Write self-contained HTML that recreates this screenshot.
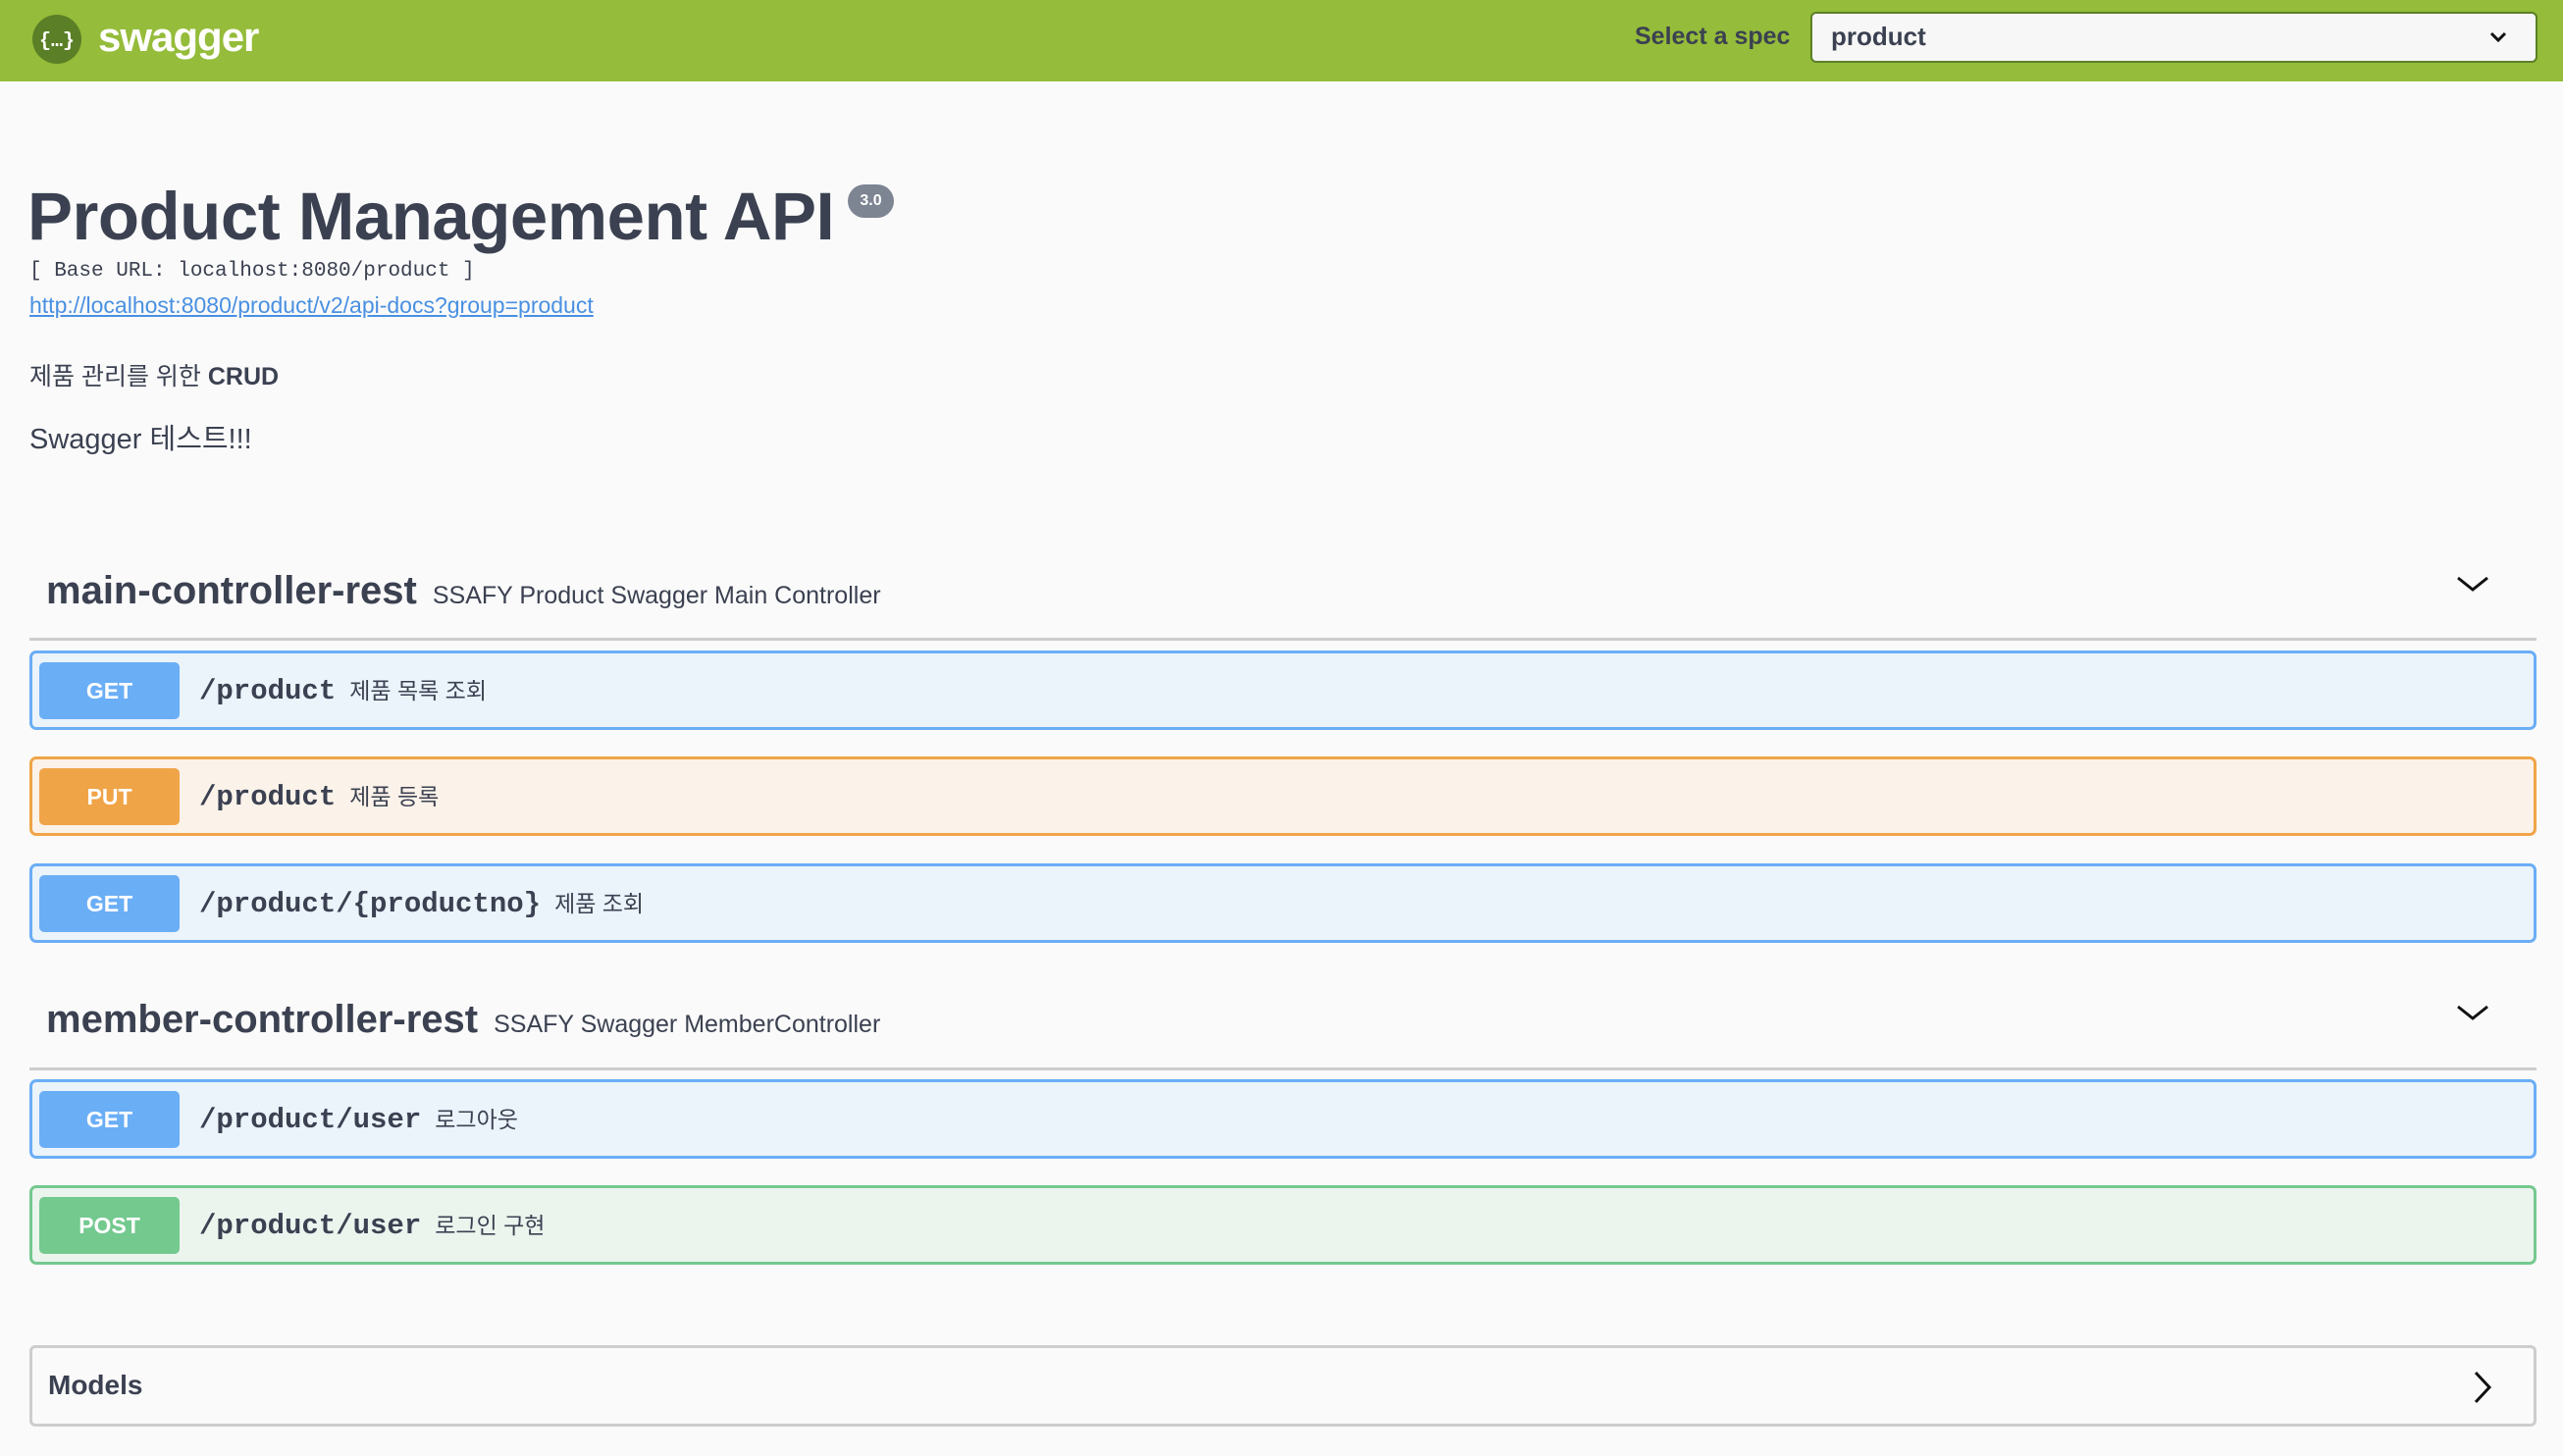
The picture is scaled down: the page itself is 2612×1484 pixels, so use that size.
<!DOCTYPE html>
<html><head><meta charset="utf-8"><style>
*{margin:0;padding:0;box-sizing:border-box}
body{width:2612px;height:1484px;background:#fafafa;font-family:"Liberation Sans","Noto Sans CJK KR",sans-serif;color:#3b4151;position:relative;overflow:hidden}
.abs{position:absolute;white-space:nowrap}
.hdr{position:absolute;left:0;top:0;width:2612px;height:83px;background:#95bc3a}
.op{position:absolute;left:30px;width:2555px;height:81px;border:3px solid;border-radius:7px}
.m{position:absolute;left:7px;top:9px;width:143px;height:58px;border-radius:5px;color:#fff;font-weight:bold;font-size:23px;text-align:center;line-height:58px}
.p{position:absolute;left:170px;top:1px;line-height:75px;font-family:"Liberation Mono",monospace;font-size:29px;font-weight:bold;color:#3b4151}
.s{font-family:"Liberation Sans","Noto Sans CJK KR",sans-serif;font-size:23px;font-weight:normal;margin-left:14px}
.get{background:#ebf3fb;border-color:#6aaef6}.get .m{background:#6aaef6}
.put{background:#fbf2e9;border-color:#f0a448}.put .m{background:#f0a448}
.post{background:#ebf5ee;border-color:#74c98f}.post .m{background:#74c98f}
.tag{position:absolute;left:47px;font-size:40px;font-weight:bold}
.td{font-size:25px;font-weight:normal;margin-left:16px}
.line{position:absolute;left:30px;width:2555px;height:3px;background:#cdcdcd}
</style></head><body>
<div class="hdr"></div>
<svg class="abs" style="left:32px;top:14px" width="52" height="52" viewBox="0 0 52 52"><circle cx="26" cy="26" r="25" fill="#5b7f26"/><text x="26" y="33" text-anchor="middle" fill="#fff" font-size="20" font-family="Liberation Mono" font-weight="bold">{…}</text></svg>
<div class="abs" style="left:100px;top:14px;font-size:42px;font-weight:bold;color:#fff;letter-spacing:-1px">swagger</div>
<div class="abs" style="left:1666px;top:23px;font-size:25px;font-weight:bold;color:#3b4151">Select a spec</div>
<div class="abs" style="left:1845px;top:12px;width:741px;height:52px;background:#f7f7f7;border:2px solid #5b7f26;border-radius:6px"></div>
<div class="abs" style="left:1866px;top:22px;font-size:26px;font-weight:bold">product</div>
<svg class="abs" style="left:2537px;top:32px" width="18" height="12" viewBox="0 0 18 12"><path d="M2 2l7 7 7-7" stroke="#111" stroke-width="3" fill="none"/></svg>

<div class="abs" style="left:28px;top:181px;font-size:69px;font-weight:bold;letter-spacing:-0.5px">Product Management API</div>
<div class="abs" style="left:864px;top:188px;width:47px;height:34px;border-radius:17px;background:#7d8492;color:#fff;font-size:16px;font-weight:bold;text-align:center;line-height:34px">3.0</div>
<div class="abs" style="left:30px;top:265px;font-family:'Liberation Mono',monospace;font-size:21px;color:#3b4151">[ Base URL: localhost:8080/product ]</div>
<div class="abs" style="left:30px;top:298px;font-size:23px;color:#4990e2;text-decoration:underline">http://localhost:8080/product/v2/api-docs?group=product</div>
<div class="abs" style="left:30px;top:364px;font-size:25px">제품 관리를 위한 <b>CRUD</b></div>
<div class="abs" style="left:30px;top:424px;font-size:29px">Swagger 테스트!!!</div>

<div class="tag abs" style="top:580px">main-controller-rest<span class="td">SSAFY Product Swagger Main Controller</span></div>
<svg class="abs" style="left:2503px;top:586px" width="34" height="20" viewBox="0 0 34 20"><path d="M2 3l15 12 15-12" stroke="#111" stroke-width="3" fill="none"/></svg>
<div class="line" style="top:650px"></div>
<div class="op get" style="top:663px"><div class="m">GET</div><div class="p">/product<span class="s">제품 목록 조회</span></div></div>
<div class="op put" style="top:771px"><div class="m">PUT</div><div class="p">/product<span class="s">제품 등록</span></div></div>
<div class="op get" style="top:880px"><div class="m">GET</div><div class="p">/product/{productno}<span class="s">제품 조회</span></div></div>

<div class="tag abs" style="top:1017px">member-controller-rest<span class="td">SSAFY Swagger MemberController</span></div>
<svg class="abs" style="left:2503px;top:1023px" width="34" height="20" viewBox="0 0 34 20"><path d="M2 3l15 12 15-12" stroke="#111" stroke-width="3" fill="none"/></svg>
<div class="line" style="top:1088px"></div>
<div class="op get" style="top:1100px"><div class="m">GET</div><div class="p">/product/user<span class="s">로그아웃</span></div></div>
<div class="op post" style="top:1208px"><div class="m">POST</div><div class="p">/product/user<span class="s">로그인 구현</span></div></div>

<div class="abs" style="left:30px;top:1371px;width:2555px;height:83px;border:3px solid #cdcdcd;border-radius:6px"></div>
<div class="abs" style="left:49px;top:1396px;font-size:28px;font-weight:bold">Models</div>
<svg class="abs" style="left:2520px;top:1397px" width="20" height="34" viewBox="0 0 20 34"><path d="M3 2l14 15-14 15" stroke="#111" stroke-width="3" fill="none"/></svg>
</body></html>
